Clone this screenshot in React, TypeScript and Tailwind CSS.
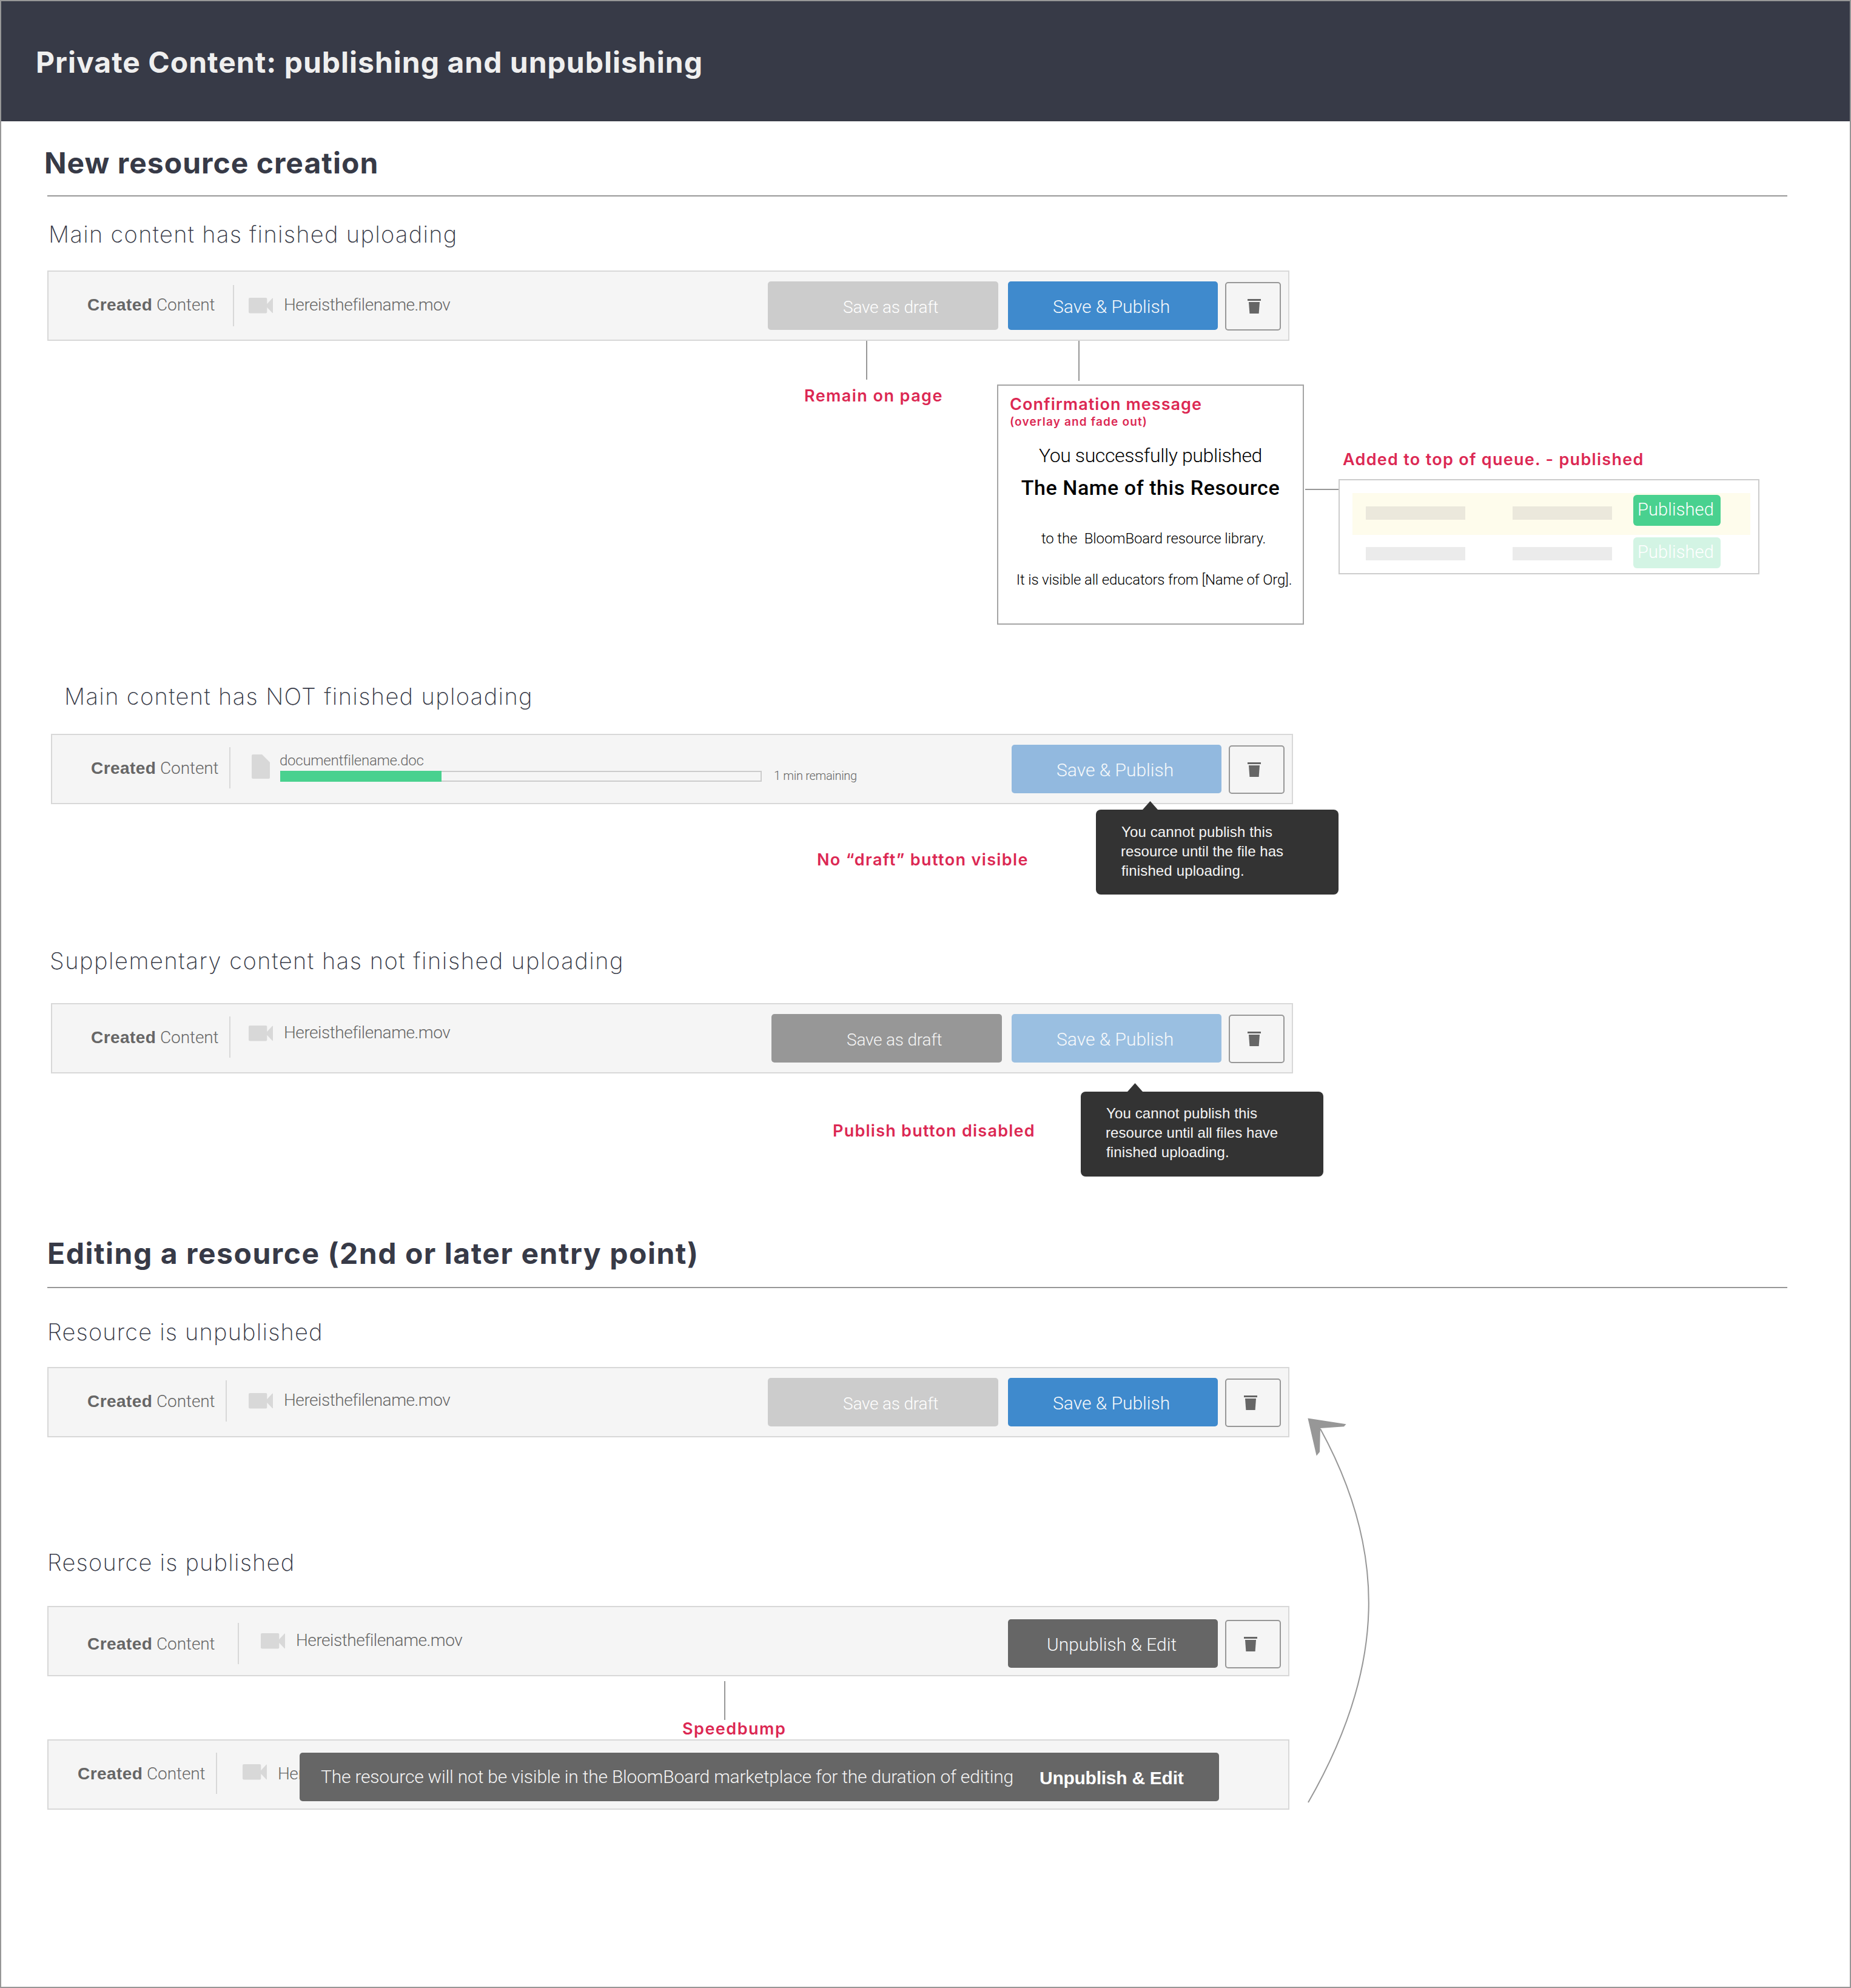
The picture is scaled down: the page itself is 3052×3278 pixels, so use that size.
import type { ReactNode } from 'react';

const inter = "font-['Inter',sans-serif]";
const roboto = "font-['Roboto',sans-serif]";
const liberation = "font-['Liberation_Sans',sans-serif]";

function Heading({ className, children }: { className: string; children: ReactNode }) {
  return (
    <h2 className={`${inter} text-[48px] leading-[56px] font-bold whitespace-nowrap text-[#373a47] ${className}`}>
      {children}
    </h2>
  );
}

function Rule({ className }: { className: string }) {
  return <div className={`ml-[78px] h-[2px] w-[2869px] shrink-0 bg-[#979797] ${className}`} />;
}

function Subheading({ className, children }: { className: string; children: ReactNode }) {
  return (
    <h3 className={`${inter} text-[38px] leading-[48px] font-extralight whitespace-nowrap text-[#373a47] ${className}`}>
      {children}
    </h3>
  );
}

function Note({ className, children }: { className: string; children: ReactNode }) {
  return (
    <p className={`${inter} text-[27px] leading-[32px] font-semibold whitespace-nowrap text-[#dc2853] ${className}`}>
      {children}
    </p>
  );
}

function VideoIcon() {
  return (
    <svg className="h-[26px] w-[40px] shrink-0" viewBox="0 0 40 26" fill="#d8d8d8">
      <rect width="30.3" height="25.5" rx="2" />
      <path d="M29.5 11 L39 0.7 Q40 0.2 40 1.2 V24.5 Q40 25.5 39 25 L29.5 15 Z" />
    </svg>
  );
}

function DocIcon({ className }: { className: string }) {
  return (
    <svg className={`h-[40px] w-[30px] shrink-0 ${className}`} viewBox="0 0 30 40" fill="#d8d8d8">
      <path d="M2 0 H17 L30 13 V38 Q30 40 28 40 H2 Q0 40 0 38 V2 Q0 0 2 0 Z" />
    </svg>
  );
}

function TrashButton({ iconClass = 'ml-[29px]' }: { iconClass?: string }) {
  return (
    <button className="mt-px ml-3 h-[80px] w-[92px] shrink-0 rounded-[5px] border-2 border-[#979797]">
      <svg className={`h-[24px] w-[22px] ${iconClass}`} viewBox="0 0 22 24" fill="#666666">
        <rect width="22" height="3" />
        <path d="M2 5 H20 L18.6 24 H3.4 Z" />
      </svg>
    </button>
  );
}

function DraftButton({ className }: { className: string }) {
  return (
    <button
      className={`${roboto} h-[80px] w-[380px] shrink-0 rounded-[5px] pl-[124px] text-left text-[28px] leading-[85px] font-light tracking-[-0.19px] whitespace-nowrap ${className}`}
    >
      Save as draft
    </button>
  );
}

function PrimaryButton({ className, children }: { className: string; children: ReactNode }) {
  return (
    <button
      className={`${roboto} ml-4 h-[80px] w-[346px] shrink-0 rounded-[5px] text-left text-[30px] leading-[83px] font-light whitespace-nowrap text-[#f7f9fb] ${className}`}
    >
      {children}
    </button>
  );
}

function VideoFile({ className, nameClass = '-mt-[8px]' }: { className: string; nameClass?: string }) {
  return (
    <div className={`flex ${className}`}>
      <VideoIcon />
      <span
        className={`${roboto} ml-[18px] h-[40px] text-[28px] leading-[40px] font-light tracking-[-0.46px] text-[#666666] ${nameClass}`}
      >
        Hereisthefilename.mov
      </span>
    </div>
  );
}

interface BarProps {
  className: string;
  label?: string;
  divider: string;
  actions?: string;
  file: ReactNode;
  children?: ReactNode;
}

function Bar({
  className,
  label = 'ml-[64px] mt-[35px] w-[228px]',
  divider,
  actions = 'mt-[16px]',
  file,
  children,
}: BarProps) {
  return (
    <div
      className={`relative flex h-[116px] w-[2048px] shrink-0 items-start border-2 border-[#d8d8d8] bg-[#f5f5f5] ${className}`}
    >
      <div className={`flex shrink-0 text-[28px] leading-[40px] text-[#666666] ${label}`}>
        <span className={`${liberation} w-[114px] font-bold tracking-[0.45px]`}>Created</span>
        <span className={`${roboto} font-light tracking-[-0.1px]`}>Content</span>
      </div>
      <div className={`h-[68px] w-[2px] shrink-0 bg-[#d8d8d8] ${divider}`} />
      {file}
      <div className={`mr-[12px] ml-auto flex ${actions}`}>{children}</div>
    </div>
  );
}

function Tooltip({ className, lines }: { className: string; lines: [string, string, string] }) {
  return (
    <div
      className={`${liberation} relative h-[140px] w-[400px] rounded-[8px] bg-[#333333] text-[24px] leading-[32px] whitespace-nowrap text-[#f5f5f5] ${className}`}
    >
      <svg className="absolute -top-[14px] left-[77px] h-[14px] w-[25px]" viewBox="0 0 25 14" fill="#333333">
        <path d="M12.5 0 L25 14 H0 Z" />
      </svg>
      <p className="tracking-[0.14px]">{lines[0]}</p>
      <p className="-ml-px tracking-[0.05px]">{lines[1]}</p>
      <p className="tracking-[0.14px]">{lines[2]}</p>
    </div>
  );
}

function QueueRow({ row, block, badge }: { row: string; block: string; badge: string }) {
  return (
    <div className={`flex h-[69px] w-[656px] pl-[22px] ${row}`}>
      <div className={`h-[22px] w-[164px] ${block}`} />
      <div className={`ml-[78px] h-[22px] w-[164px] ${block}`} />
      <div
        className={`${roboto} ml-[35px] h-[51px] w-[144px] rounded-[6px] pl-[7px] text-[29px] leading-[49px] font-light tracking-[0.15px] ${badge}`}
      >
        Published
      </div>
    </div>
  );
}

export default function App() {
  return (
    <main className="relative flex h-[3278px] w-[3052px] flex-col items-start overflow-hidden bg-white">
      <header className="flex h-[200px] w-full shrink-0 items-center bg-[#373a47] pt-[5px] pl-[59px]">
        <h1 className={`${inter} text-[48px] leading-[56px] font-bold tracking-[1px] whitespace-nowrap text-[#efefef]`}>
          Private Content: publishing and unpublishing
        </h1>
      </header>

      <Heading className="mt-[41px] ml-[73px] tracking-[1.02px]">New resource creation</Heading>
      <Rule className="mt-[25px]" />

      <Subheading className="mt-[38px] ml-[80px] tracking-[1.3px]">Main content has finished uploading</Subheading>
      <Bar
        className="mt-[36px] ml-[78px]"
        label="ml-[64px] mt-[35px] w-[240px]"
        divider="mt-[22px]"
        file={<VideoFile className="mt-[43px] ml-[24px]" />}
      >
        <DraftButton className="bg-[#cccccc] text-white" />
        <PrimaryButton className="bg-[#3f8acd] pl-[74px]">Save &amp; Publish</PrimaryButton>
        <TrashButton iconClass="ml-[35px]" />
      </Bar>

      <div className="flex h-[562px] shrink-0 items-start">
        <div className="ml-[1326px] w-[318px]">
          <div className="ml-[102px] h-[64px] w-[2px] bg-[#979797]" />
          <Note className="mt-[11px] tracking-[1.44px]">Remain on page</Note>
        </div>

        <div className="w-[506px]">
          <div className="ml-[134px] h-[66px] w-[2px] bg-[#979797]" />
          <div className="mt-[6px] h-[396px] border-2 border-[#a4a4a4] pt-[15px] whitespace-nowrap text-black">
            <Note className="pl-[19px] tracking-[1.05px]">Confirmation message</Note>
            <p
              className={`${inter} mt-px pl-[19px] text-[19px] leading-[24px] font-semibold tracking-[1.16px] text-[#dc2853]`}
            >
              (overlay and fade out)
            </p>
            <div className={`${roboto} text-center font-light`}>
              <p className="mt-[23px] text-[32px] leading-[40px] tracking-[-0.4px]">You successfully published</p>
              <p className="mt-[13px] text-[34px] leading-[40px] font-medium tracking-[0.55px]">
                The Name of this Resource
              </p>
              <p className="mt-[48px] pl-[10px] text-[24px] leading-[32px] tracking-[-0.12px] whitespace-pre">
                {'to the  BloomBoard resource library.'}
              </p>
              <p className="mt-[36px] pl-[12px] text-[24px] leading-[32px] tracking-[-0.19px]">
                It is visible all educators from [Name of Org].
              </p>
            </div>
          </div>
        </div>

        <div className="mt-[244px] ml-[2px] h-[2px] w-[55px] bg-[#979797]" />

        <div className="w-[694px] pt-[180px]">
          <Note className="ml-[7px] tracking-[1.29px]">Added to top of queue. - published</Note>
          <div className="mt-[16px] h-[157px] border-2 border-[#cccccc] pt-[21px] pl-[21px]">
            <QueueRow row="bg-[#fefcec]" block="mt-[22px] bg-[#ebe8dc]" badge="mt-[3px] bg-[#49d18f] text-white" />
            <QueueRow row="" block="mt-[20px] bg-[#ebebeb]" badge="mt-[4px] bg-[#d3f4e4] text-white" />
          </div>
        </div>
      </div>

      <Subheading className="ml-[106px] tracking-[1.36px]">Main content has NOT finished uploading</Subheading>
      <Bar
        className="mt-[38px] ml-[84px]"
        divider="mt-[20px]"
        file={
          <div className={`${roboto} flex font-light text-[#666666]`}>
            <DocIcon className="mt-[32px] ml-[35px]" />
            <div className="mt-[28px] ml-[17px] w-[794px]">
              <p className="-ml-px text-[24px] leading-[28px] tracking-[-0.26px]">documentfilename.doc</p>
              <div className="mt-[3px] h-[18px] border-2 border-[#cccccc]">
                <div className="-mt-[2px] -ml-[2px] h-[18px] w-[266px] bg-[#49d18f]" />
              </div>
            </div>
            <span className="mt-[55px] ml-[20px] text-[20px] leading-[24px] tracking-[-0.31px]">1 min remaining</span>
          </div>
        }
      >
        <PrimaryButton className="bg-[#92b9df] pl-[74px]">Save &amp; Publish</PrimaryButton>
        <TrashButton />
      </Bar>
      <div className="flex h-[234px] shrink-0 items-start">
        <Note className="mt-[76px] ml-[1347px] w-[460px] tracking-[1.37px]">No “draft” button visible</Note>
        <Tooltip
          className="mt-[9px] pt-[21px] pl-[42px]"
          lines={['You cannot publish this', 'resource until the file has', 'finished uploading.']}
        />
      </div>

      <Subheading className="ml-[82px] tracking-[1.54px]">Supplementary content has not finished uploading</Subheading>
      <Bar
        className="mt-[46px] ml-[84px]"
        divider="mt-[20px]"
        file={<VideoFile className="mt-[35px] ml-[30px]" />}
      >
        <DraftButton className="bg-[#979797] text-[#f5f5f5]" />
        <PrimaryButton className="bg-[#9abfe1] pl-[74px]">Save &amp; Publish</PrimaryButton>
        <TrashButton />
      </Bar>
      <div className="flex h-[269px] shrink-0 items-start">
        <Note className="mt-[79px] ml-[1373px] w-[409px] tracking-[1.25px]">Publish button disabled</Note>
        <Tooltip
          className="mt-[30px] pt-[20px] pl-[42px]"
          lines={['You cannot publish this', 'resource until all files have', 'finished uploading.']}
        />
      </div>

      <Heading className="ml-[78px] tracking-[1.52px]">Editing a resource (2nd or later entry point)</Heading>
      <Rule className="mt-[27px]" />

      <Subheading className="mt-[48px] ml-[78px] tracking-[1.17px]">Resource is unpublished</Subheading>
      <Bar
        className="mt-[34px] ml-[78px]"
        divider="mt-[20px]"
        file={<VideoFile className="mt-[41px] ml-[36px]" />}
      >
        <DraftButton className="bg-[#cccccc] text-white" />
        <PrimaryButton className="bg-[#3f8acd] pl-[74px]">Save &amp; Publish</PrimaryButton>
        <TrashButton />
      </Bar>

      <Subheading className="mt-[182px] ml-[78px] tracking-[1.2px]">Resource is published</Subheading>
      <Bar
        className="mt-[48px] ml-[78px]"
        label="ml-[64px] mt-[41px] w-[248px]"
        divider="mt-[26px]"
        actions="mt-[20px]"
        file={<VideoFile className="mt-[43px] ml-[36px]" />}
      >
        <PrimaryButton className="bg-[#666666] pl-[64px]">Unpublish &amp; Edit</PrimaryButton>
        <TrashButton />
      </Bar>

      <div className="mt-[8px] ml-[1194px] h-[64px] w-[2px] shrink-0 bg-[#979797]" />
      <Note className="-mt-px ml-[1125px] tracking-[1.5px]">Speedbump</Note>

      <Bar
        className="mt-px ml-[78px]"
        label="ml-[48px] mt-[35px] w-[228px]"
        divider="mt-[20px]"
        file={<VideoFile className="mt-[39px] ml-[42px]" nameClass="-mt-[4px]" />}
      >
        <div className="absolute top-[20px] left-[414px] flex h-[80px] w-[1516px] rounded-[5px] bg-[#666666] text-[30px] whitespace-nowrap text-[#f5f5f5]">
          <span className={`${roboto} w-[1186px] pl-[35px] leading-[79px] font-light tracking-[-0.2px]`}>
            The resource will not be visible in the BloomBoard marketplace for the duration of editing
          </span>
          <span className={`${liberation} pl-[34px] leading-[83px] font-bold tracking-[-0.26px] text-white`}>
            Unpublish &amp; Edit
          </span>
        </div>
      </Bar>

      <svg
        className="absolute top-[2330px] left-[2140px] h-[650px] w-[130px]"
        viewBox="2140 2330 130 650"
        fill="none"
      >
        <path d="M2177 2356 C2287 2557 2286 2748 2157 2972" stroke="#979797" strokeWidth="2" />
        <path d="M2156.4 2338.5 L2219.5 2348.3 L2216 2352.3 L2177 2355 L2176 2394 L2170.7 2400.5 Z" fill="#979797" />
      </svg>

      <div className="pointer-events-none absolute inset-0 border-2 border-[#979797]" />
    </main>
  );
}
